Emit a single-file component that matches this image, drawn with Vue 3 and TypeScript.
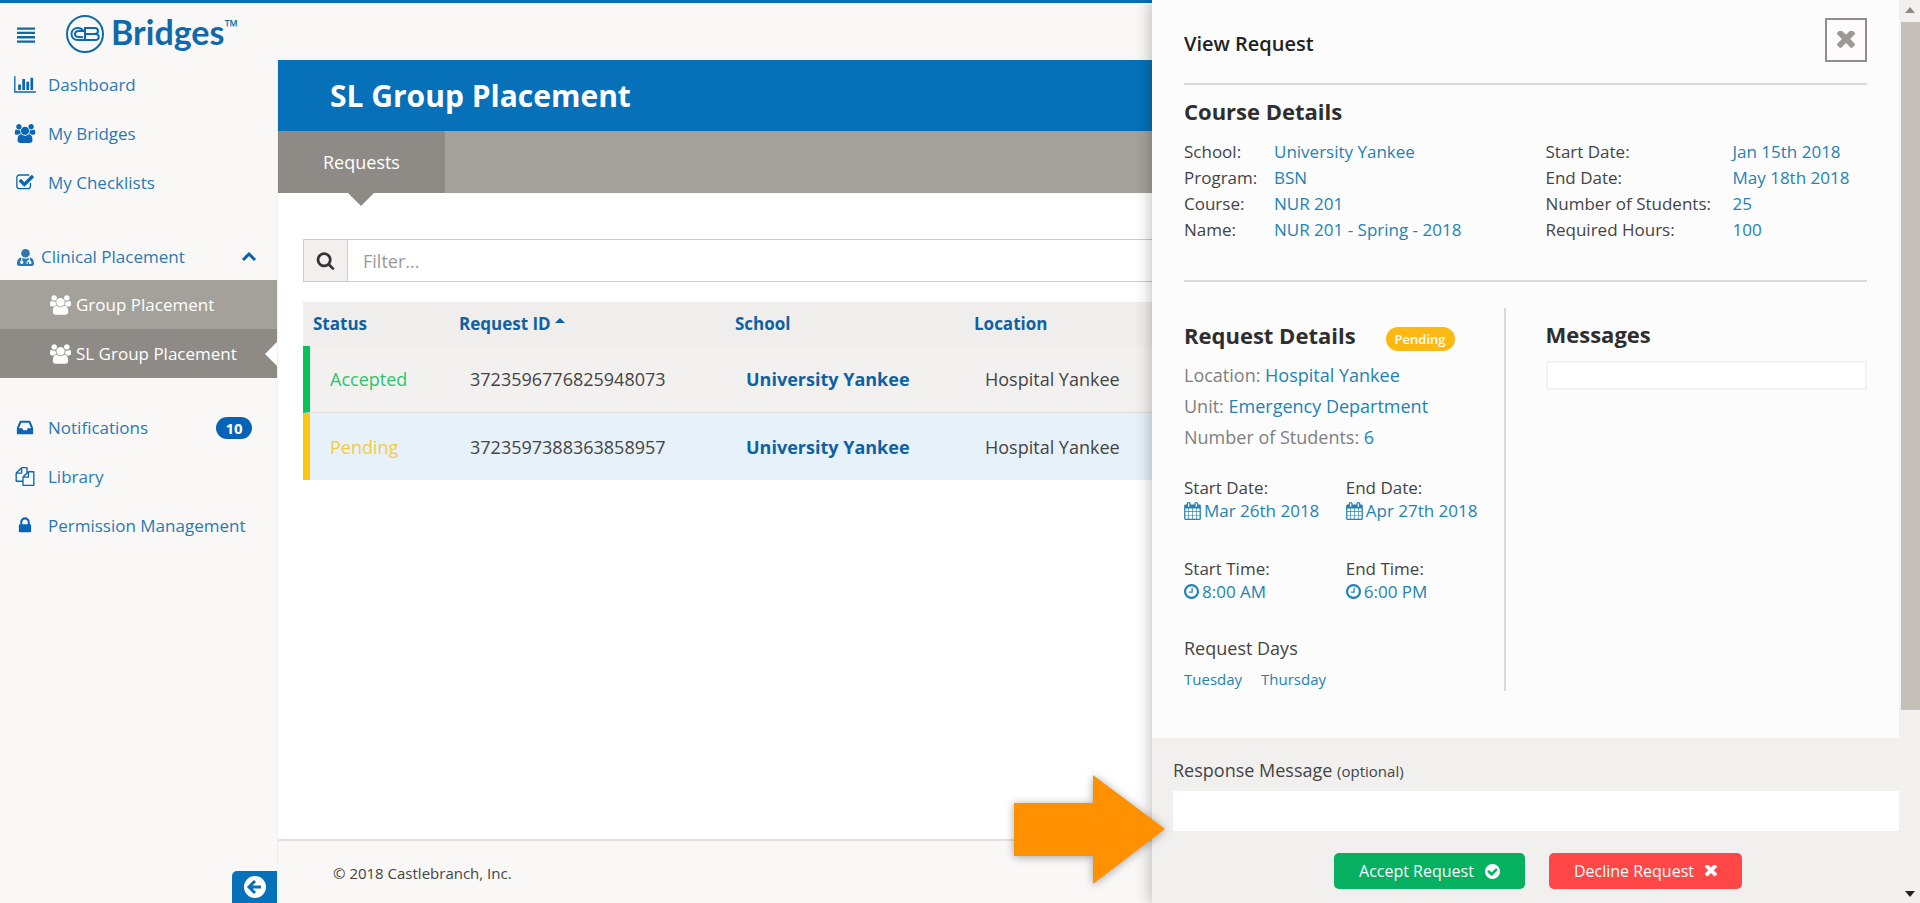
<script setup lang="ts">
import { ref } from 'vue'

interface NavItem {
  label: string
  icon: string
  badge?: string
}
interface RequestRow {
  status: 'Accepted' | 'Pending'
  id: string
  school: string
  location: string
}
interface Field {
  label: string
  value: string
}

const icons: Record<string, { box: string; d: string }> = {
  chart: {
    box: '0 0 2048 1792',
    d: 'M640 896v512h-256v-512h256zm384-512v1024h-256v-1024h256zm1024 1152v128h-2048v-1536h128v1408h1920zm-640-896v768h-256v-768h256zm384-384v1152h-256v-1152h256z',
  },
  users: {
    box: '64 0 1920 1792',
    d: 'M657 896q-162 5-265 128h-134q-82 0-138-40.5t-56-118.5q0-353 124-353 6 0 43.5 21t97.5 42.5 119 21.5q67 0 133-23-5 37-5 66 0 159 93 256zm1071 637q0 120-73 189.5t-194 69.5h-874q-121 0-194-69.5t-73-189.5q0-53 3.5-103.5t14-109 26.5-108.5 43-97.5 62-81 85.5-53.5 111.5-20q10 0 43 21.5t73 48 107 48 135 21.5 135-21.5 107-48 73-48 43-21.5q61 0 111.5 20t85.5 53.5 62 81 43 97.5 26.5 108.5 14 109 3.5 103.5zm-1024-1277q0 106-75 181t-181 75-181-75-75-181 75-181 181-75 181 75 75 181zm704 384q0 159-112.5 271.5t-271.5 112.5-271.5-112.5-112.5-271.5 112.5-271.5 271.5-112.5 271.5 112.5 112.5 271.5zm576 225q0 78-56 118.5t-138 40.5h-134q-103-123-265-128 93-97 93-256 0-29-5-66 66 23 133 23 59 0 119-21.5t97.5-42.5 43.5-21q124 0 124 353zm-128-609q0 106-75 181t-181 75-181-75-75-181 75-181 181-75 181 75 75 181z',
  },
  check: {
    box: '0 0 1792 1792',
    d: 'M1472 930v318q0 119-84.5 203.5t-203.5 84.5h-832q-119 0-203.5-84.5t-84.5-203.5v-832q0-119 84.5-203.5t203.5-84.5h832q63 0 117 25 15 7 18 23 3 17-9 29l-49 49q-10 10-23 10-3 0-9-2-23-6-45-6h-832q-66 0-113 47t-47 113v832q0 66 47 113t113 47h832q66 0 113-47t47-113v-254q0-13 9-22l64-64q10-10 23-10 6 0 12 3 20 8 20 29zm231-489l-814 814q-24 24-57 24t-57-24l-430-430q-24-24-24-57t24-57l110-110q24-24 57-24t57 24l263 263 647-647q24-24 57-24t57 24l110 110q24 24 24 57t-24 57z',
  },
  inbox: {
    box: '0 0 1792 1792',
    d: 'M1151 960h316q-1-3-2.5-8t-2.5-8l-212-496h-708l-212 496q-1 2-2.5 8t-2.5 8h316l95 192h320zm513 30v482q0 26-19 45t-45 19h-1408q-26 0-45-19t-19-45v-482q0-62 25-123l238-552q10-25 36.5-42t52.5-17h832q26 0 52.5 17t36.5 42l238 552q25 61 25 123z',
  },
  files: {
    box: '0 0 1792 1792',
    d: 'M1696 384q40 0 68 28t28 68v1216q0 40-28 68t-68 28h-960q-40 0-68-28t-28-68v-288h-544q-40 0-68-28t-28-68v-672q0-40 20-88t48-76l408-408q28-28 76-48t88-20h416q40 0 68 28t28 68v328q68-40 128-40h416zm-544 213l-299 299h299v-299zm-640-384l-299 299h299v-299zm196 647l316-316v-416h-384v416q0 40-28 68t-68 28h-416v640h512v-256q0-40 20-88t48-76zm956 804v-1152h-384v416q0 40-28 68t-68 28h-416v640h896z',
  },
  lock: {
    box: '0 0 1792 1792',
    d: 'M640 768h512v-192q0-106-75-181t-181-75-181 75-75 181v192zm832 96v576q0 40-28 68t-68 28h-960q-40 0-68-28t-28-68v-576q0-40 28-68t68-28h32v-192q0-184 132-316t316-132 316 132 132 316v192h32q40 0 68 28t28 68z',
  },
  search: {
    box: '0 0 1792 1792',
    d: 'M1216 832q0-185-131.5-316.5t-316.5-131.5-316.5 131.5-131.5 316.5 131.5 316.5 316.5 131.5 316.5-131.5 131.5-316.5zm512 832q0 52-38 90t-90 38q-54 0-90-38l-343-342q-179 124-399 124-143 0-273.5-55.5t-225-150-150-225-55.5-273.5 55.5-273.5 150-225 225-150 273.5-55.5 273.5 55.5 225 150 150 225 55.5 273.5q0 220-124 399l343 343q37 37 37 90z',
  },
  times: {
    box: '302 434 1188 1188',
    d: 'M1490 1322q0 40-28 68l-136 136q-28 28-68 28t-68-28l-294-294-294 294q-28 28-68 28t-68-28l-136-136q-28-28-28-68t28-68l294-294-294-294q-28-28-28-68t28-68l136-136q28-28 68-28t68 28l294 294 294-294q28-28 68-28t68 28l136 136q28 28 28 68t-28 68l-294 294 294 294q28 28 28 68z',
  },
  done: {
    box: '128 128 1536 1536',
    d: 'M1412 734q0-28-18-46l-91-90q-19-19-45-19t-45 19l-408 407-226-226q-19-19-45-19t-45 19l-91 90q-18 18-18 46 0 27 18 45l362 362q19 19 45 19 27 0 46-19l543-543q18-18 18-45zm252 162q0 209-103 385.5t-279.5 279.5-385.5 103-385.5-103-279.5-279.5-103-385.5 103-385.5 279.5-279.5 385.5-103 385.5 103 279.5 279.5 103 385.5z',
  },
  clock: {
    box: '128 128 1536 1536',
    d: 'M1024 544v448q0 14-9 23t-23 9h-320q-14 0-23-9t-9-23v-64q0-14 9-23t23-9h224v-352q0-14 9-23t23-9h64q14 0 23 9t9 23zm416 352q0-148-73-273t-198-198-273-73-273 73-198 198-73 273 73 273 198 198 273 73 273-73 198-198 73-273zm224 0q0 209-103 385.5t-279.5 279.5-385.5 103-385.5-103-279.5-279.5-103-385.5 103-385.5 279.5-279.5 385.5-103 385.5 103 279.5 279.5 103 385.5z',
  },
  calendar: {
    box: '64 0 1664 1792',
    d: 'M192 1664h288v-288h-288v288zm352 0h320v-288h-320v288zm-352-352h288v-320h-288v320zm352 0h320v-320h-320v320zm-352-384h288v-288h-288v288zm736 736h320v-288h-320v288zm-384-736h320v-288h-320v288zm768 736h288v-288h-288v288zm-384-352h320v-320h-320v320zm-352-864v-288q0-13-9.5-22.5t-22.5-9.5h-64q-13 0-22.5 9.5t-9.5 22.5v288q0 13 9.5 22.5t22.5 9.5h64q13 0 22.5-9.5t9.5-22.5zm736 864h288v-320h-288v320zm-384-384h320v-288h-320v288zm384 0h288v-288h-288v288zm32-480v-288q0-13-9.5-22.5t-22.5-9.5h-64q-13 0-22.5 9.5t-9.5 22.5v288q0 13 9.5 22.5t22.5 9.5h64q13 0 22.5-9.5t9.5-22.5zm384-64v1280q0 52-38 90t-90 38h-1408q-52 0-90-38t-38-90v-1280q0-52 38-90t90-38h128v-96q0-66 47-113t113-47h64q66 0 113 47t47 113v96h384v-96q0-66 47-113t113-47h64q66 0 113 47t47 113v96h128q52 0 90 38t38 90z',
  },
}

const topNav: NavItem[] = [
  { label: 'Dashboard', icon: 'chart' },
  { label: 'My Bridges', icon: 'users' },
  { label: 'My Checklists', icon: 'check' },
]
const bottomNav: NavItem[] = [
  { label: 'Notifications', icon: 'inbox', badge: '10' },
  { label: 'Library', icon: 'files' },
  { label: 'Permission Management', icon: 'lock' },
]
const subNav = ['Group Placement', 'SL Group Placement']
const activeSub = ref('SL Group Placement')
const placementOpen = ref(true)

const rows: RequestRow[] = [
  { status: 'Accepted', id: '3723596776825948073', school: 'University Yankee', location: 'Hospital Yankee' },
  { status: 'Pending', id: '3723597388363858957', school: 'University Yankee', location: 'Hospital Yankee' },
]

const courseLeft: Field[] = [
  { label: 'School:', value: 'University Yankee' },
  { label: 'Program:', value: 'BSN' },
  { label: 'Course:', value: 'NUR 201' },
  { label: 'Name:', value: 'NUR 201 - Spring - 2018' },
]
const courseRight: Field[] = [
  { label: 'Start Date:', value: 'Jan 15th 2018' },
  { label: 'End Date:', value: 'May 18th 2018' },
  { label: 'Number of Students:', value: '25' },
  { label: 'Required Hours:', value: '100' },
]
const requestFields: Field[] = [
  { label: 'Location:', value: 'Hospital Yankee' },
  { label: 'Unit:', value: 'Emergency Department' },
  { label: 'Number of Students:', value: '6' },
]
const schedule = [
  { label: 'Start Date:', value: 'Mar 26th 2018', icon: 'calendar' },
  { label: 'End Date:', value: 'Apr 27th 2018', icon: 'calendar' },
  { label: 'Start Time:', value: '8:00 AM', icon: 'clock' },
  { label: 'End Time:', value: '6:00 PM', icon: 'clock' },
]
const days = ['Tuesday', 'Thursday']

const filter = ref('')
const message = ref('')
const response = ref('')
</script>

<template>
  <div class="app">
    <header class="header">
      <button class="menu" type="button" aria-label="Toggle menu">
        <svg viewBox="0 0 18 16" width="18" height="16">
          <path d="M0 0.500h18v2.300H0zM0 4.800h18v2.300H0zM0 9.100h18v2.300H0zM0 13.400h18v2.300H0z" />
        </svg>
      </button>
      <a class="logo" href="#">
        <svg class="mark" viewBox="0 0 40 40" width="40" height="40" aria-hidden="true">
          <circle cx="20" cy="20" r="18" />
          <path d="M18 16.5C17 14.8 15.400 14 13 14C9 14 6.500 16.500 6.500 20S9 26 13 26H30C32.500 26 33.800 25 33.800 23S32.500 20 30 20H21M20 26V14H29.500C31.800 14 33 15 33 17S31.800 20 29.500 20M18 23.500C16.800 22.800 15.500 23 14 23C11.500 23 10 22 10 20S11.500 17 14 17H20" />
        </svg>
        <span class="brand">Bridges</span><span class="tm">™</span>
      </a>
    </header>

    <div class="body">
      <aside class="sidebar">
        <nav>
          <a v-for="item in topNav" :key="item.label" class="nav-item" href="#">
            <svg class="nav-icon" :viewBox="icons[item.icon].box" width="22" height="19"><path :d="icons[item.icon].d" /></svg>
            <span>{{ item.label }}</span>
          </a>

          <button class="group" type="button" :aria-expanded="placementOpen" @click="placementOpen = !placementOpen">
            <svg viewBox="0 0 16 16" width="17" height="17" aria-hidden="true">
              <circle cx="8" cy="4" r="4" />
              <path fill-rule="evenodd" d="M4 8C1 8.500 0 11 0 14Q0 16 2 16H14Q16 16 16 14C16 11 15 8.500 12 8V10.500A2 2 0 0 1 13.500 12.500V14H11.500V12.500A1 1 0 0 0 10 12.500V14H9V12.500A2 2 0 0 1 11 10.500V8.500Q8 10 5 8.500V11A1.500 1.500 0 1 1 4 11Z" />
            </svg>
            <span>Clinical Placement</span>
            <svg class="chevron" viewBox="0 0 16 10" width="16" height="10" aria-hidden="true"><path d="M2 8L8 2L14 8" /></svg>
          </button>
          <div v-if="placementOpen" class="sub">
            <a v-for="s in subNav" :key="s" class="sub-item" :class="{ active: s === activeSub }" href="#" @click.prevent="activeSub = s">
              <svg :viewBox="icons.users.box" width="21" height="20"><path :d="icons.users.d" /></svg>
              <span>{{ s }}</span>
            </a>
          </div>

          <div class="lower">
            <a v-for="item in bottomNav" :key="item.label" class="nav-item" href="#">
              <svg class="nav-icon" :viewBox="icons[item.icon].box" width="22" height="19"><path :d="icons[item.icon].d" /></svg>
              <span>{{ item.label }}</span>
              <span v-if="item.badge" class="badge">{{ item.badge }}</span>
            </a>
          </div>
        </nav>
        <button class="collapse" type="button" aria-label="Collapse sidebar">
          <svg viewBox="0 0 22 22" width="22" height="22">
            <circle cx="11" cy="11" r="11" />
            <path d="M11 5L5 11L11 17M6 11H17" />
          </svg>
        </button>
      </aside>

      <main class="main">
        <h1 class="title">SL Group Placement</h1>
        <div class="tabs"><button class="tab" type="button">Requests</button></div>
        <section class="content">
          <div class="filter">
            <label class="addon" for="filter" aria-label="Filter">
              <svg :viewBox="icons.search.box" width="19" height="19"><path :d="icons.search.d" /></svg>
            </label>
            <input id="filter" v-model="filter" type="text" placeholder="Filter..." />
          </div>
          <table class="requests">
            <colgroup><col class="c-status" /><col class="c-id" /><col class="c-school" /><col /></colgroup>
            <thead>
              <tr>
                <th>Status</th>
                <th>
                  Request ID
                  <svg class="sort" viewBox="0 0 10 5" width="10" height="5" aria-hidden="true"><path d="M5 0L10 5H0Z" /></svg>
                </th>
                <th>School</th>
                <th>Location</th>
              </tr>
            </thead>
            <tbody>
              <tr v-for="r in rows" :key="r.id" :class="r.status.toLowerCase()">
                <td class="status">{{ r.status }}</td>
                <td>{{ r.id }}</td>
                <td><a href="#">{{ r.school }}</a></td>
                <td>{{ r.location }}</td>
              </tr>
            </tbody>
          </table>
        </section>
        <footer class="footer">© 2018 Castlebranch, Inc.</footer>
      </main>
    </div>

    <section class="panel" aria-labelledby="panel-title">
      <div class="panel-main">
        <div class="details">
          <div class="panel-head">
            <h2 id="panel-title">View Request</h2>
            <button class="close" type="button" aria-label="Close">
              <svg :viewBox="icons.times.box" width="18" height="18"><path :d="icons.times.d" /></svg>
            </button>
          </div>

          <div class="course">
            <h3>Course Details</h3>
            <div class="columns">
              <dl class="fields">
                <template v-for="f in courseLeft" :key="f.label"><dt>{{ f.label }}</dt><dd>{{ f.value }}</dd></template>
              </dl>
              <dl class="fields wide">
                <template v-for="f in courseRight" :key="f.label"><dt>{{ f.label }}</dt><dd>{{ f.value }}</dd></template>
              </dl>
            </div>
          </div>

          <div class="columns request">
            <div class="request-info">
              <div class="request-head"><h3>Request Details</h3><span class="pill">Pending</span></div>
              <p v-for="f in requestFields" :key="f.label" class="line">{{ f.label }} <span>{{ f.value }}</span></p>
              <dl class="schedule">
                <div v-for="s in schedule" :key="s.label">
                  <dt>{{ s.label }}</dt>
                  <dd>
                    <svg :viewBox="icons[s.icon].box" :width="s.icon === 'clock' ? 15 : 17" :height="s.icon === 'clock' ? 15 : 18" aria-hidden="true"><path :d="icons[s.icon].d" /></svg>
                    <span>{{ s.value }}</span>
                  </dd>
                </div>
              </dl>
              <p class="days-title">Request Days</p>
              <div class="days"><span v-for="d in days" :key="d">{{ d }}</span></div>
            </div>
            <div class="messages">
              <h3><label for="messages">Messages</label></h3>
              <input id="messages" v-model="message" type="text" />
            </div>
          </div>
        </div>

        <form class="reply" @submit.prevent>
          <label for="response">Response Message <small>(optional)</small></label>
          <div class="response">
            <input id="response" v-model="response" type="text" />
            <svg class="pointer" viewBox="0 0 151 109" width="151" height="109" aria-hidden="true">
              <path d="M0 28H79V0L151 54L79 109V81H0Z" />
            </svg>
          </div>
          <div class="actions">
            <button class="accept" type="submit">
              Accept Request
              <svg :viewBox="icons.done.box" width="15" height="15" aria-hidden="true"><path :d="icons.done.d" /></svg>
            </button>
            <button class="decline" type="button">
              Decline Request
              <svg :viewBox="icons.times.box" width="12" height="12" aria-hidden="true"><path :d="icons.times.d" /></svg>
            </button>
          </div>
        </form>
      </div>
      <div class="scrollbar" aria-hidden="true">
        <svg viewBox="0 0 10 6" width="10" height="6"><path d="M5 0L10 6H0Z" /></svg>
        <div class="track"><div class="thumb"></div></div>
        <svg class="down" viewBox="0 0 10 6" width="10" height="6"><path d="M0 0H10L5 6Z" /></svg>
      </div>
    </section>
  </div>
</template>

<style>
body {
  margin: 0;
}
</style>

<style scoped>
.app {
  position: relative;
  display: flex;
  flex-direction: column;
  min-height: 100vh;
  overflow: hidden;
  background: #f9f8f7;
  color: #444;
  font: 17px/26px "Open Sans", "Noto Sans", sans-serif;
}
.app *,
.app {
  box-sizing: border-box;
}
h1, h2, h3, p, dl, dd {
  margin: 0;
}
a {
  color: inherit;
  text-decoration: none;
}
button,
input {
  margin: 0;
  border: 0;
  border-radius: 0;
  font: inherit;
  color: inherit;
}
button {
  padding: 0;
  background: none;
  cursor: pointer;
}
svg {
  display: block;
  flex: none;
  fill: currentColor;
}

.header {
  display: flex;
  align-items: center;
  height: 60px;
  padding: 0 17px;
  border-top: 3px solid #0670b8;
}
.menu {
  margin-top: 6px;
  color: #12699f;
}
.logo {
  display: flex;
  align-items: center;
  margin-left: 30px;
  color: #0f69ab;
}
.mark {
  margin-top: 4px;
}
.mark circle {
  fill: none;
  stroke: currentColor;
  stroke-width: 2;
}
.mark path {
  fill: none;
  stroke: currentColor;
  stroke-width: 2;
}
.brand {
  margin-left: 6px;
  font: 700 34px/40px Lato, "Open Sans", sans-serif;
}
.tm {
  align-self: flex-start;
  font-size: 18px;
  line-height: 32px;
}

.body {
  display: flex;
  flex: 1;
}
.sidebar {
  display: flex;
  flex-direction: column;
  justify-content: space-between;
  flex: none;
  width: 278px;
  border-right: 1px solid #f0efed;
  color: #2b78b4;
}
.nav-item {
  display: flex;
  align-items: center;
  gap: 12px;
  height: 49px;
  padding: 0 25px 0 14px;
}
.nav-icon {
  color: #0a66b4;
}
.badge {
  width: 36px;
  margin-left: auto;
  border-radius: 11px;
  background: #0664b8;
  color: #fff;
  font-size: 15px;
  font-weight: 700;
  line-height: 22px;
  text-align: center;
}
.group {
  display: flex;
  align-items: center;
  gap: 7px;
  width: 100%;
  height: 46px;
  margin-top: 27px;
  padding: 0 20px 0 17px;
}
.chevron {
  margin-left: auto;
}
.chevron path {
  fill: none;
  stroke: #0a5fa8;
  stroke-width: 3;
}
.sub {
  color: #fff;
  background: #a4a19b;
}
.sub-item {
  display: flex;
  align-items: center;
  gap: 5px;
  height: 49px;
  padding-left: 50px;
}
.sub-item.active {
  position: relative;
  background: #8e8b86;
}
.sub-item.active::after {
  content: "";
  position: absolute;
  right: 0;
  border: 12px solid transparent;
  border-left: 0;
  border-right-color: #fff;
}
.lower {
  margin-top: 25px;
}
.collapse {
  display: grid;
  place-items: center;
  align-self: flex-end;
  width: 45px;
  height: 32px;
  border-radius: 5px 0 0 0;
  background: #0670b8;
  color: #fff;
}
.collapse path {
  fill: none;
  stroke: #0670b8;
  stroke-width: 3;
}

.main {
  display: flex;
  flex-direction: column;
  flex: 1;
  min-width: 0;
  background: #fff;
}
.title {
  padding: 1px 52px 0;
  background: #0670b8;
  color: #fff;
  font-size: 30px;
  font-weight: 700;
  line-height: 70px;
}
.tabs {
  display: flex;
  background: #a4a19b;
}
.tab {
  position: relative;
  padding: 0 45px;
  background: #8e8b86;
  color: #fff;
  font-size: 18px;
  line-height: 62px;
}
.tab::after {
  content: "";
  position: absolute;
  top: 100%;
  left: calc(50% - 13px);
  border: 13px solid transparent;
  border-bottom: 0;
  border-top-color: #8e8b86;
}
.content {
  flex: 1;
  padding: 46px 25px;
  font-size: 18px;
}
.filter {
  display: flex;
  height: 43px;
  border: 1px solid #cfcdca;
}
.addon {
  display: grid;
  place-items: center;
  width: 44px;
  border-right: 1px solid #cfcdca;
  background: #f1f0ee;
  color: #333;
}
.filter input {
  flex: 1;
  min-width: 0;
  padding: 0 15px;
  background: #fff;
  outline: 0;
}
.filter input::placeholder {
  color: #999;
  opacity: 1;
}
.requests {
  width: 100%;
  margin-top: 20px;
  border-spacing: 0;
  table-layout: fixed;
}
.c-status {
  width: 146px;
}
.c-id {
  width: 276px;
}
.c-school {
  width: 239px;
}
th {
  height: 44px;
  padding: 0 10px;
  background: #efeeec;
  color: #0f61a3;
  font-size: 17px;
  text-align: left;
}
.sort {
  display: inline-block;
  vertical-align: 7px;
}
td {
  height: 67px;
  padding: 0 21px;
  background: #f3f1f0;
}
.accepted td {
  border-bottom: 1px solid #dfdedc;
}
.pending td {
  background: #e6f1f9;
}
td a {
  color: #0f61a3;
  font-weight: 700;
}
.accepted .status {
  border-left: 7px solid #05c45c;
  color: #2bc46d;
}
.pending .status {
  border-left: 7px solid #fdc50f;
  color: #f5cb45;
}
.status {
  padding: 0 20px;
}
.footer {
  padding: 19px 55px 17px;
  border-top: 2px solid #e2e1df;
  background: #f9f8f7;
  font-size: 15px;
}

.panel {
  position: absolute;
  inset: 0 0 0 auto;
  display: flex;
  width: 40%;
  background: #fcfcfc;
  box-shadow: 0 0 16px rgba(0, 0, 0, 0.3);
}
.panel-main {
  display: flex;
  flex-direction: column;
  flex: 1;
}
.details {
  flex: 1;
  padding: 0 32px;
}
.panel-head {
  display: flex;
  align-items: center;
  justify-content: space-between;
  height: 85px;
  padding-top: 4px;
  border-bottom: 2px solid #d9d9d9;
}
h2 {
  color: #222;
  font-size: 20px;
  font-weight: 600;
}
h3 {
  color: #2e2e2e;
  font-size: 22px;
  font-weight: 700;
  line-height: 30px;
}
.close {
  display: grid;
  place-items: center;
  width: 42px;
  height: 44px;
  margin-bottom: 8px;
  border: 2px solid #918d8b;
  color: #9d9894;
}
.course {
  height: 197px;
  padding-top: 11px;
  border-bottom: 2px solid #d9d9d9;
}
.columns {
  display: grid;
  grid-template-columns: 1fr 1fr;
  column-gap: 40px;
}
.fields {
  display: grid;
  grid-template-columns: 90px 1fr;
  margin-top: 13px;
}
.fields.wide {
  grid-template-columns: 187px 1fr;
}
dd {
  color: #2283b4;
}
.request {
  margin-top: 26px;
}
.request-info {
  padding: 11px 0 0;
  border-right: 2px solid #dadada;
}
.request-head {
  display: flex;
  align-items: center;
  gap: 30px;
  margin-bottom: 9px;
}
.pill {
  margin-top: 8px;
  padding: 0 9px;
  border-radius: 12px;
  background: #fdb913;
  color: #fff;
  font-size: 13px;
  font-weight: 600;
  line-height: 24px;
}
.request-head h3 {
  line-height: 30px;
}
.line {
  color: #808080;
  font-size: 18px;
  line-height: 31px;
}
.line span {
  color: #2283b4;
}
.schedule {
  display: grid;
  grid-template-columns: 1fr 1fr;
  gap: 35px 4px;
  margin-top: 23px;
  line-height: 23px;
}
.schedule dd {
  display: flex;
  align-items: center;
  gap: 3px;
}
.days-title {
  margin-top: 32px;
  font-size: 18px;
}
.days {
  display: flex;
  gap: 19px;
  margin-top: 6px;
  color: #2283b4;
  font-size: 15px;
  line-height: 24px;
}
.messages {
  padding-top: 11px;
}
.messages input {
  display: block;
  width: 100%;
  height: 29px;
  margin-top: 12px;
  border: 2px solid #f2f2f2;
  background: #fff;
}
.reply {
  padding: 19px 0 14px 21px;
  background: #f1f0ef;
  font-size: 18px;
}
.reply small {
  font-size: 15px;
}
.response {
  position: relative;
  margin-top: 7px;
}
.response input {
  display: block;
  width: 100%;
  height: 40px;
  padding: 0 12px;
  background: #fff;
}
.pointer {
  position: absolute;
  top: -16px;
  left: -159px;
  fill: #ff9000;
  filter: drop-shadow(0 1px 4px rgba(0, 0, 0, 0.35));
}
.actions {
  display: flex;
  justify-content: center;
  gap: 24px;
  margin-top: 22px;
  padding-left: 4px;
}
.actions button {
  display: flex;
  align-items: center;
  gap: 11px;
  height: 36px;
  padding: 0 25px;
  border-radius: 5px;
  color: #fff;
  font-size: 16px;
}
.accept {
  background: #05b060;
}
.actions .decline {
  background: #ff4747;
}
.scrollbar {
  display: flex;
  flex-direction: column;
  align-items: center;
  width: 21px;
  padding: 7px 0 6px;
  background: #f2f1ef;
  color: #8d8a87;
}
.track {
  flex: 1;
  width: 19px;
  margin: 9px 0;
  align-self: flex-end;
}
.thumb {
  height: 80%;
  background: #c4c0b9;
}
.down {
  color: #222;
}
</style>
